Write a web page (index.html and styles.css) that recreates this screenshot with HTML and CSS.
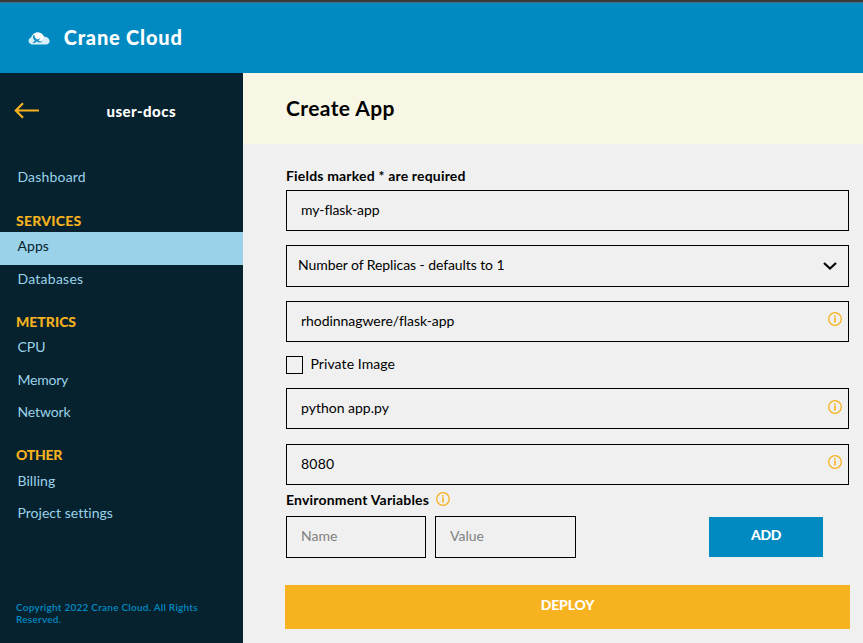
FILE: index.html
```html
<!DOCTYPE html>
<html lang="en">
<head>
<meta charset="utf-8">
<title>Crane Cloud</title>
<link rel="stylesheet" href="styles.css">
</head>
<body>
<svg class="defs" aria-hidden="true">
  <symbol id="info" viewBox="0 0 14 14">
    <circle cx="7" cy="7" r="6.300" fill="none" stroke="currentColor" stroke-width="1.300"/>
    <path d="M6.200 3.200h1.600v1.500H6.200zM6.200 5.600h1.600v5H6.200z" fill="currentColor"/>
  </symbol>
</svg>
<header class="topbar">
  <svg class="logo" viewBox="0 0 22 13">
    <path d="M3.600 12.500A3.500 3.500 0 0 1 3 5.700C3.700 2.600 6.400.4 9.600.4c3 0 5.400 1.800 6.200 4.400 3-.3 5.800 1.700 5.800 4.300 0 2-1.500 3.400-3.600 3.400z" fill="#d9f0fa"/>
    <path d="M4.500 5C5.200 2.200 7.200.4 9.800.4c3.200 0 5.800 2.200 6.200 5.200L13 9 9 7.500z" fill="#fff"/>
    <path d="M5 3.400 6.600 3c-.2 2.200.9 3.800 2.900 4.400L12.500 6l-2 2.700c1.300.9 2.700.9 4.200 0-1.500 2.200-4.200 2.400-5.700.9L6 11.300 4.500 10.800l2.500-2C5.300 7.500 4.600 5.400 5 3.400z" fill="#1c91c8"/>
  </svg>
  <span class="brand">Crane Cloud</span>
</header>
<div class="layout">
  <aside class="sidebar">
    <div class="project">
      <svg class="back" viewBox="0 0 26 17"><path d="M9 1.300 1.800 8.500 9 15.700M1.800 8.500H25" fill="none" stroke="currentColor" stroke-width="2.200"/></svg>
      <span class="project-name">user-docs</span>
    </div>
    <nav class="nav">
      <a class="item dashboard">Dashboard</a>
      <h2 class="group services">SERVICES</h2>
      <a class="item active">Apps</a>
      <a class="item databases">Databases</a>
      <h2 class="group metrics">METRICS</h2>
      <a class="item cpu">CPU</a>
      <a class="item memory">Memory</a>
      <a class="item network">Network</a>
      <h2 class="group other">OTHER</h2>
      <a class="item billing">Billing</a>
      <a class="item settings">Project settings</a>
    </nav>
    <footer class="copyright">Copyright 2022 Crane Cloud. All Rights Reserved.</footer>
  </aside>
  <main class="main">
    <div class="title-bar"><h1 class="title">Create App</h1></div>
    <form class="form">
      <div class="label required"><span>Fields marked * are required</span></div>
      <div class="field"><span class="t-name">my-flask-app</span></div>
      <div class="field select"><span class="t-replicas">Number of Replicas - defaults to 1</span>
        <svg class="chevron" viewBox="0 0 14 8"><path d="M1 1l6 5.500L13 1" fill="none" stroke="#000" stroke-width="2.200"/></svg></div>
      <div class="field"><span class="t-image">rhodinnagwere/flask-app</span><svg class="info"><use href="#info"/></svg></div>
      <label class="check"><span class="box"></span><span class="t-private">Private Image</span></label>
      <div class="field command"><span class="t-command">python app.py</span><svg class="info"><use href="#info"/></svg></div>
      <div class="field port"><span class="t-port">8080</span><svg class="info"><use href="#info"/></svg></div>
      <div class="label env"><span>Environment Variables</span><svg class="info"><use href="#info"/></svg></div>
      <div class="env-row">
        <div class="field small hint"><span class="t-key">Name</span></div>
        <div class="field small value hint"><span class="t-value">Value</span></div>
        <button type="button" class="add"><span>ADD</span></button>
      </div>
      <button type="button" class="deploy"><span>DEPLOY</span></button>
    </form>
  </main>
</div>
</body>
</html>
```
FILE: styles.css
```css
* { box-sizing: border-box; }
body {
  margin: 0;
  height: 643px;
  overflow: hidden;
  display: flex;
  flex-direction: column;
  font-family: Lato, "Liberation Sans", sans-serif;
  font-size: 14px;
  line-height: 20px;
  font-variant-ligatures: none;
  color: #000;
  background: #f0f0f0;
  white-space: nowrap;
}
.defs { display: none; }
.topbar {
  height: 73px;
  flex: none;
  display: flex;
  align-items: center;
  padding: 0 0 1px 28px;
  border-top: 2px solid #3b3b3b;
  background: #008ac1;
  box-shadow: inset 0 1px #3c6e86;
}
.logo { width: 22px; height: 13px; margin: 2px 13.700px 0 0; }
.brand { font-size: 20px; font-weight: 900; color: #fff; letter-spacing: .8px; }
.layout { flex: 1; display: flex; min-height: 0; }
.sidebar {
  width: 243px;
  flex: none;
  display: flex;
  flex-direction: column;
  background: #06222e;
}
.project { height: 88px; display: flex; align-items: flex-start; padding: 28px 0 0 14px; }
.back { width: 26px; height: 17px; margin-top: 1px; color: #f7b21f; }
.project-name { margin-left: 66.500px; font-size: 15px; font-weight: 900; color: #fff; letter-spacing: .45px; }
.nav { display: flex; flex-direction: column; }
.item { height: 33px; padding: 4px 0 0 17.400px; color: #9ad3ea; letter-spacing: .1px; }
.active { background: #9ad2e9; color: #06222e; }
.dashboard { height: 34px; padding-top: 6px; letter-spacing: .2px; }
.databases { height: 32px; letter-spacing: .27px; }
.memory { height: 32px; letter-spacing: -.2px; }
.network { letter-spacing: -.1px; }
.settings { padding-top: 3px; letter-spacing: .03px; }
.group { margin: 0; padding-left: 16px; font-size: 14px; font-weight: 900; color: #f7b21f; }
.services { height: 37px; padding-top: 16px; letter-spacing: .25px; }
.metrics { height: 36px; padding-top: 15px; }
.other { height: 36px; padding-top: 14px; letter-spacing: -.25px; }
.copyright {
  margin-top: auto;
  padding: 0 30px 18px 16px;
  font-size: 10px;
  line-height: 12px;
  font-weight: 600;
  letter-spacing: .24px;
  white-space: normal;
  color: #008ac1;
}
.main { flex: 1; min-width: 0; }
.title-bar { height: 71px; padding: 22px 0 0 43px; background: #f8f6e4; }
.title { margin: 0; font-size: 21px; line-height: 26px; font-weight: 700; letter-spacing: .4px; }
.form { display: flex; flex-direction: column; padding: 22px 14px 0 43px; }
.label { display: flex; height: 24px; font-weight: 700; letter-spacing: .18px; }
.field {
  height: 41px;
  margin-bottom: 15px;
  padding: 9px 6px 0 14px;
  display: flex;
  justify-content: space-between;
  border: 1px solid #000;
}
.required + .field { margin-bottom: 14px; }
.select { height: 42px; margin-bottom: 14px; padding-left: 11px; }
.t-name { letter-spacing: -.1px; }
.t-replicas { letter-spacing: -.08px; }
.t-image { letter-spacing: -.05px; }
.t-private { margin-top: -3px; letter-spacing: .08px; }
.chevron { width: 14px; height: 8px; margin: 7px 5px 0 0; }
.info { width: 14px; height: 14px; color: #f7b21f; margin-top: 1px; }
.command .info { margin-top: 2px; }
.check { display: flex; align-items: center; height: 18px; margin: -1px 0 14px; }
.box { width: 17px; height: 18px; margin-right: 7.500px; border: 1px solid #000; }
.port { margin-bottom: 5px; }
.t-port { letter-spacing: .2px; }
.env { height: 26px; }
.env .info { margin: 2px 0 0 7px; }
.env-row { display: flex; align-items: flex-start; }
.small { width: 140px; height: 42px; margin: 0 9px 0 0; }
.value { width: 141px; margin: 0; }
.hint { color: #808080; }
.add, .deploy {
  border: 0;
  padding: 0;
  font: 900 14px/20px Lato, "Liberation Sans", sans-serif;
  color: #fff;
}
.add { width: 114px; height: 40px; margin: 1px 0 0 133px; padding-bottom: 4px; background: #008ac1; letter-spacing: -.3px; }
.deploy { height: 44px; margin: 27px -1px 0; padding-bottom: 5px; background: #f7b21f; letter-spacing: -.15px; }
```
